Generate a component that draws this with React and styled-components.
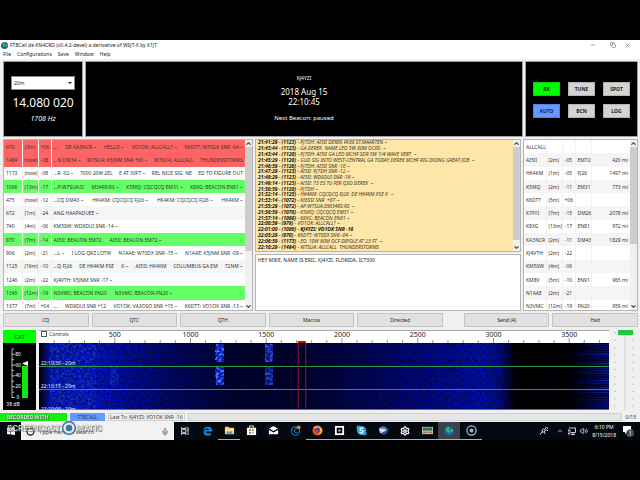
import React from 'react';
import styled, { createGlobalStyle } from 'styled-components';
import { ChevronUp, ChevronDown, Mic, Volume2, Settings, X, Minus, Copy } from 'lucide-react';

const GlobalStyle = createGlobalStyle`
  * {
    box-sizing: border-box;
  }

  body {
    margin: 0;
    background: #000000;
    font-family: 'Noto Sans', 'Open Sans', sans-serif;
    font-size: 5px;
    color: #333333;
  }

  button, input, select, textarea {
    font-family: inherit;
    font-size: inherit;
    margin: 0;
  }
`;

const Screen = styled.div`
  padding: 40px 0;
  overflow: hidden;
`;

const AppWindow = styled.main`
  background: #f0f0f0;
`;

const TitleBar = styled.header`
  display: flex;
  align-items: center;
  height: 10px;
  padding: 0 9px 0 1px;
  gap: 2px;
  background: #ffffff;
`;

const Title = styled.h1`
  flex: 1;
  margin: 0;
  font-size: 5px;
  line-height: 10px;
  font-weight: 400;
  color: #222222;
`;

const WindowButton = styled.button`
  display: flex;
  justify-content: center;
  width: 18px;
  padding: 0;
  border: 0;
  background: none;
  color: #555555;

  &:last-child {
    width: 7px;
  }
`;

const MenuBar = styled.nav`
  display: flex;
  gap: 6px;
  height: 9px;
  padding: 0 3px;
  background: #ffffff;

  a {
    font-size: 5px;
    line-height: 9px;
    color: #222222;
    text-decoration: none;
  }
`;

const Body = styled.div`
  display: grid;
  gap: 2px;
  padding: 2px 2px 3px 3px;
`;

const TopRow = styled.div`
  display: grid;
  grid-template-columns: 80fr 438fr 113fr;
  gap: 2px;
`;

const DarkPanel = styled.section`
  display: flex;
  flex-direction: column;
  align-items: center;
  height: 76px;
  padding: ${({ $top }) => $top}px 7px 0;
  background: #000000;
  border: 1px solid #a0a0a0;
  color: #ffffff;
`;

const BandBox = styled.div`
  position: relative;
  width: 100%;
  margin-bottom: 5px;

  svg {
    position: absolute;
    right: 3px;
    top: 5px;
  }
`;

const BandSelect = styled.select`
  display: block;
  width: 100%;
  height: 14px;
  padding: 0 2px;
  appearance: none;
  border: 1px solid #8a8a8a;
  border-radius: 0;
  background: #ffffff;
  color: #222222;
`;

const Readout = styled.div`
  font-size: ${({ $size }) => $size}px;
  line-height: ${({ $line }) => $line}px;
  font-style: ${({ $italic }) => ($italic ? 'italic' : 'normal')};
  margin-bottom: ${({ $after }) => $after || 0}px;
  white-space: nowrap;
`;

const ModeGrid = styled.div`
  display: grid;
  grid-template-columns: repeat(3, 1fr);
  gap: 8px;
  width: 100%;
`;

const ModeButton = styled.button`
  height: 14px;
  padding: 0;
  border: 1px solid rgba(0, 0, 0, 0.15);
  background: ${({ $color }) => $color || '#d3d3d3'};
  color: #222222;
  font-weight: 700;
`;

const MiddleRow = styled.div`
  display: grid;
  grid-template-columns: 250fr 266fr 115fr;
  gap: 2px;
  height: 172px;
`;

const Pane = styled.div`
  display: flex;
  min-width: 0;
  min-height: 0;
  overflow: hidden;
  background: ${({ $color }) => $color || '#ffffff'};
  border: 1px solid #b4b4b4;
`;

const PaneContent = styled.div`
  flex: 1;
  min-width: 0;
  overflow: hidden;
`;

const Bar = styled.div`
  display: flex;
  flex-direction: column;
  align-items: center;
  justify-content: space-between;
  width: 7px;
  background: #f0f0f0;
  color: #444444;
`;

const Thumb = styled.div`
  flex: none;
  width: 7px;
  height: ${({ $size }) => $size}%;
  margin-bottom: auto;
  background: #cdcdcd;
`;

const ListTable = styled.table`
  width: 100%;
  height: 173px;
  table-layout: fixed;
  border-collapse: collapse;

  td {
    padding: 0 2px;
    line-height: 12px;
    white-space: nowrap;
    overflow: hidden;
    border-right: 1px solid rgba(200, 200, 200, 0.25);
  }

  td:last-child {
    border-right: 0;
  }
`;

const ListRow = styled.tr`
  background: ${({ $color }) => $color};
`;

const Cell = styled.td`
  text-align: ${({ $align }) => $align || 'left'};
`;

const Messages = styled.div`
  display: flex;
  gap: ${({ $spread }) => ($spread ? 0 : 8)}px;
  justify-content: ${({ $spread }) => ($spread ? 'space-between' : 'flex-start')};
`;

const ChatColumn = styled.div`
  display: grid;
  grid-template-rows: 113fr 57fr;
  gap: 2px;
  min-width: 0;
  min-height: 0;
`;

const LogLines = styled.ol`
  display: grid;
  grid-auto-rows: 1fr;
  height: 110px;
  margin: 0;
  padding: 0 2px;
  list-style: none;
  font-style: italic;
  color: #3a3422;

  li {
    display: flex;
    align-items: center;
    min-height: 0;
    line-height: 5px;
    white-space: pre;
  }

  b {
    color: #111111;
  }
`;

const Entry = styled.textarea`
  flex: 1;
  min-width: 0;
  padding: 2px;
  border: 0;
  resize: none;
  outline: none;
  background: transparent;
  color: #222222;
`;

const ActionRow = styled.div`
  display: grid;
  grid-template-columns: repeat(5, 86fr) 15fr repeat(2, 86fr);
  gap: 3px;
`;

const ActionButton = styled.button`
  height: 14px;
  padding: 0;
  border: 1px solid #c4c4c4;
  background: #e1e1e1;
  color: #222222;
`;

const SignalRow = styled.div`
  display: grid;
  grid-template-columns: 33px 1fr 26px;
  gap: 3px;
  padding-top: 1px;
`;

const Meter = styled.div`
  background: #000000;

  svg {
    display: block;
  }
`;

const CatLabel = styled.button`
  display: block;
  width: 100%;
  height: 13px;
  padding: 0;
  border: 0;
  background: #00ff00;
  color: #114411;
  font-size: 6px;
`;

const Spectrum = styled.div`
  position: relative;
  min-width: 0;

  svg {
    display: block;
    width: 100%;
  }
`;

const ControlsToggle = styled.label`
  position: absolute;
  left: 2px;
  top: 1px;
  display: flex;
  align-items: center;
  gap: 2px;
  line-height: 6px;

  input {
    width: 6px;
    height: 6px;
    appearance: none;
    border: 1px solid #555555;
    background: #ffffff;
  }
`;

const GainBox = styled.div`
  position: relative;
  display: flex;
  justify-content: center;

  svg {
    position: absolute;
    inset: 0;
  }
`;

const GainSlider = styled.input`
  position: relative;
  width: 16px;
  height: 80px;
  appearance: none;
  writing-mode: vertical-lr;
  direction: rtl;
  background: linear-gradient(90deg, transparent 7px, #e2e2e2 7px, #e2e2e2 9px, transparent 9px);

  &::-webkit-slider-thumb {
    appearance: none;
    width: 15px;
    height: 5px;
    background: #1fc93f;
  }
`;

const StatusBar = styled.footer`
  display: flex;
  gap: 3px;
  height: 9px;
  padding-right: 3px;
`;

const StatusItem = styled.div`
  flex: ${({ $width }) => ($width ? `0 0 ${$width}px` : '1')};
  height: 8px;
  padding: 0 1px;
  text-align: ${({ $align }) => $align || 'left'};
  background: ${({ $color }) => $color || '#e6e6e6'};
  border: ${({ $plain }) => ($plain ? '0' : '1px solid #d0d0d0')};
  line-height: ${({ $plain }) => ($plain ? 8 : 6)}px;
  white-space: nowrap;
`;

const TaskBar = styled.footer`
  display: flex;
  height: 18px;
  background: #04080f;
  color: #ffffff;
`;

const TaskButton = styled.button`
  display: flex;
  align-items: center;
  justify-content: center;
  width: ${({ $width }) => $width || 22}px;
  padding: 0;
  border: 0;
  border-bottom: 1px solid ${({ $open }) => ($open ? '#8ab8e8' : 'transparent')};
  background: ${({ $active }) => ($active ? '#3a4148' : 'none')};
  background-clip: padding-box;
  color: #ffffff;
`;

const SearchBox = styled.label`
  display: flex;
  align-items: center;
  width: 153px;
  padding: 1px 5px 0;
  gap: 4px;
  background: #f2f2f2;
  color: #555555;

  input {
    flex: 1;
    min-width: 0;
    padding: 0;
    border: 0;
    outline: none;
    background: none;
    font-size: 6px;
  }

  input::placeholder {
    color: #444444;
  }
`;

const Tray = styled.div`
  display: flex;
  align-items: center;
  gap: 4px;
  margin-left: auto;
  padding-right: 6px;
`;

const Clock = styled.time`
  display: grid;
  text-align: center;
  line-height: 8px;
`;

const Stage = styled.div`
  position: relative;
`;

const Watermark = styled.div`
  position: absolute;
  left: 7px;
  top: 0;
  color: #ffffff;
  font-weight: 700;
  line-height: 8px;
  text-shadow: 0 0 1px #000000, 1px 1px 1px #666666;
  opacity: 0.9;
  pointer-events: none;
`;

const WatermarkName = styled.div`
  display: flex;
  align-items: center;
  height: 14px;
  font-family: 'Inter', 'Liberation Sans', sans-serif;
  font-size: 8px;
  font-weight: 500;
`;

const red = '#ff6464';
const green = '#64ff64';

const activity = [
  { freq: 976, age: '(3m)', snr: '+06', color: red, spread: true, text: ['...', 'DE KA3NCR ~', 'HELLO ~', 'VO1OK: ALLCALL? ~', 'K6DTT: WT0DX SNR -04 ~'] },
  { freq: 1484, age: '(now)', snr: '-08', color: red, spread: true, text: ['...N DM34 ~', 'W7SUA: K5JNM SNR +00 ~', 'W7SUA: ALLCALL', 'THUNDERSTORMS'] },
  { freq: 1173, age: '(now)', snr: '-08', spread: true, text: ['...R -02 ~', '7000 20W 2EL', 'E AT 30FT ~', 'REL NICE SIG. NE', 'ED TO FIGURE OUT'] },
  { freq: 1066, age: '(13m)', snr: '-17', color: green, spread: true, text: ['...P:W7SUA:D', 'M34RS:RS ~', 'K5MQ: CQCQCQ EM31 ~', 'K8XG: BEACON EN81 ~'] },
  { freq: 475, age: '(now)', snr: '-12', spread: true, text: ['...CQ DM43 ~', 'HK4KM: CQCQCQ FJ26 ~', 'HK4KM: CQCQCQ FJ26 ~', 'HK4KM ~'] },
  { freq: 672, age: '(1m)', snr: '-24', text: ['ANG HAAPADUEE ~'] },
  { freq: 740, age: '(4m)', snr: '-06', text: ['KM5SW: WD9DUI SNR -14 ~'] },
  { freq: 870, age: '(7m)', snr: '-14', color: green, text: ['AI5II: BEACON EM72', 'AI5II: BEACON EM72 ~'] },
  { freq: 906, age: '(2m)', snr: '-21', spread: true, text: ['...L ~', 'I LOG QRZ LOTW', 'N1AAE: WT0DX SNR -15 ~', 'N1AAE: K5JNM SNR -09 ~'] },
  { freq: 1125, age: '(16m)', snr: '-10', spread: true, text: ['...Q FJ26', 'DE HK4KM PSE', 'K ~', 'AI5II: HK4KM', 'COLUMBUS GA EM', '72NM ~'] },
  { freq: 1246, age: '(2m)', snr: '-22', text: ['KJ4VTH: K5JNM SNR -17 ~'] },
  { freq: 1345, age: '(12m)', snr: '-19', color: green, text: ['N3VMC: BEACON FN20', 'N3VMC: BEACON FN20 ~'] },
  { freq: 1377, age: '(7m)', snr: '+04', spread: true, text: ['...', 'WD9DUI SNR +12', 'VO1OK: VA3OSO SNR +15 ~', 'K6DTT: VO1OK SNR -13 ~'] }
];

const log = [
  ['21:41:29', 1123, 'PJ7DH: AI5II DEREK FK88 ST.MAARTEN ~'],
  ['21:43:44', 1123, 'GA DEREK. NAME LEO 5W 80M OCFD  ~'],
  ['21:43:44', 1120, 'PJ7DH: AI5II GA LEO MCHF SDR 5W 1/4 WAVE VERT  ~'],
  ['21:45:29', 1120, 'GUD SIG INTO WEST-CENTRAL GA TODAY DEREK MCHF RIG DOING GREAT JOB  ~'],
  ['21:46:59', 1120, 'PJ7DH: AI5II SNR -10 ~'],
  ['21:47:29', 1123, 'AI5II: PJ7DH SNR -12 ~'],
  ['21:48:29', 1123, 'AI5II: WD9DUI SNR -16 ~'],
  ['21:49:14', 1123, 'AI5II: 73 ES TU FER QSO DEREK  ~'],
  ['21:50:59', 1120, 'PJ7DH ~'],
  ['21:52:14', 1125, 'HK4KM: CQCQCQ FJ26  DE HK4KM PSE K  ~'],
  ['21:53:14', 1072, 'KI6SSI SNR  +07 ~'],
  ['21:55:29', 1072, 'AP:W7SUA:DM34RS:RS  ~'],
  ['21:56:59', 1070, 'K5MQ: CQCQCQ EM31 ~'],
  ['21:57:14', 1066, 'K8XG: BEACON EN81 ~'],
  ['22:00:59', 978, 'VO1OK: ALLCALL? ~'],
  ['22:01:00', 1080, 'KJ4YZI: VO1OK SNR -16', true],
  ['22:05:29', 970, 'K6DTT: WT0DX SNR -04 ~'],
  ['22:06:59', 1173, 'EO. 10W 80M OCF DIPOLE AT 23 FT  ~'],
  ['22:10:29', 1494, 'W7SUA: ALLCALL  THUNDERSTORMS']
];

const stations = [
  ['ALLCALL', '', '', '', ''],
  ['AI5II', '(2m)', '-05', 'EM72', '420 mi'],
  ['HK4KM', '(1m)', '-05', 'FJ26', '1497 mi'],
  ['K5MQ', '(2m)', '-11', 'EM31', '773 mi'],
  ['K6DTT', '(5m)', '+06', '', ''],
  ['K7FYI', '(7m)', '-15', 'DM26', '2078 mi'],
  ['K8XG', '(13m)', '-17', 'EN81', '972 mi'],
  ['KA3NCR', '(2m)', '-11', 'DM43', '1829 mi'],
  ['KJ4VTH', '(2m)', '-22', '', ''],
  ['KM5SW', '(4m)', '-06', '', ''],
  ['KM8V', '(5m)', '-10', 'EN91', '965 mi'],
  ['N1AAE', '(2m)', '-21', '', ''],
  ['N3VMC', '(12m)', '-19', 'FN20', '959 mi']
];

// the ruler and waterfall cover 0 to 3763 Hz
const hz = (value) => `${(value / 3763) * 100}%`;

function ScrollBar({ size }) {
  return (
    <Bar>
      <ChevronUp size={7} strokeWidth={4} />
      <Thumb $size={size} />
      <ChevronDown size={7} strokeWidth={4} />
    </Bar>
  );
}

function Globe({ size }) {
  return (
    <svg width={size} height={size} viewBox="0 0 12 12">
      <circle cx="6" cy="6" r="6" fill="#1761a0" />
      <path d="M3 2Q6 0 7 2L6 4L8 6L6 9L4 7L2 6Z" fill="#34b56a" />
      <path d="M8 3L11 5L9 8Z" fill="#4fc981" />
    </svg>
  );
}

function LevelMeter() {
  return (
    <Meter>
      <CatLabel>CAT</CatLabel>
      <svg width="33" height="67" viewBox="0 0 33 67">
        <path d="M9 6V55" stroke="#ffffff" strokeWidth="0.7" />
        {Array.from({ length: 10 }, (_, i) => (
          <path key={i} d={`M9 ${54.5 - i * 5.4}h${i % 2 ? 2 : 3}`} stroke="#ffffff" strokeWidth="0.7" />
        ))}
        {[0, 20, 40, 60, 80].map((level) => (
          <text key={level} x="15" y={56 - level * 0.54} textAnchor="middle" fontSize="5" fill="#ffffff">{level}</text>
        ))}
        <rect x="19" y="23" width="6" height="32" fill="#12e612" />
        <path d="M19 20.500L25 18V23Z" fill="#ffffff" />
        <text x="10" y="63" textAnchor="middle" fontSize="5" fill="#ffffff">38 dB</text>
      </svg>
    </Meter>
  );
}

function Ruler() {
  return (
    <svg height="13">
      <rect width="100%" height="13" fill="#ffffff" />
      <path d="M0 0.500H2000" stroke="#aaaaaa" />
      {Array.from({ length: 37 }, (_, i) => (
        <line key={i} x1={hz((i + 1) * 100)} x2={hz((i + 1) * 100)} y1={(i + 1) % 5 ? 10 : 8} y2="13" stroke="#666666" strokeWidth="0.7" />
      ))}
      {[500, 1000, 1500, 2000, 2500, 3000, 3500].map((mark) => (
        <text key={mark} x={hz(mark)} y="7" textAnchor="middle" fontSize="7" fill="#222222">{mark}</text>
      ))}
      <rect x={hz(1708)} y="11" width="8" height="2" fill="#d40000" />
    </svg>
  );
}

function Waterfall() {
  const bursts = [[1168, 1, 1], [1168, 24, 1], [1492, 1, 0.8], [1492, 24, 0.7], [470, 24, 0.3]];

  return (
    <svg height="67">
      <defs>
        <linearGradient id="band">
          <stop offset="0" stopColor="#000010" />
          <stop offset="0.008" stopColor="#000848" />
          <stop offset="0.02" stopColor="#0018c4" />
          <stop offset="0.1" stopColor="#0014d0" />
          <stop offset="0.16" stopColor="#000ca0" />
          <stop offset="0.24" stopColor="#000668" />
          <stop offset="0.34" stopColor="#000334" />
          <stop offset="0.45" stopColor="#000330" />
          <stop offset="0.56" stopColor="#000558" />
          <stop offset="0.68" stopColor="#00088c" />
          <stop offset="0.78" stopColor="#000fb4" />
          <stop offset="0.81" stopColor="#000a88" />
          <stop offset="0.835" stopColor="#000000" />
          <stop offset="0.93" stopColor="#000004" />
          <stop offset="1" stopColor="#00064c" />
        </linearGradient>
        <linearGradient id="streak">
          <stop offset="0" stopColor="#0020d8" stopOpacity="0" />
          <stop offset="1" stopColor="#1530ee" />
        </linearGradient>
        <filter id="noise" x="0" y="0" width="100%" height="100%" colorInterpolationFilters="sRGB">
          <feTurbulence type="fractalNoise" baseFrequency="0.7 0.4" numOctaves="2" seed="8" />
          <feColorMatrix values="0 0 0 0 0  0 0 0 0 0  0 0 0 0 0.04  1.6 0 0 0 -0.6" />
        </filter>
        <filter id="sparkle" x="0" y="0" width="100%" height="100%" colorInterpolationFilters="sRGB">
          <feTurbulence type="fractalNoise" baseFrequency="0.35 0.4" numOctaves="2" seed="3" result="grain" />
          <feColorMatrix in="grain" values="0 0 0 0 0.3  0 0 0 0 0.45  0 0 0 0 1  4 0 0 0 -1.8" />
        </filter>
      </defs>
      <rect width="100%" height="67" fill="url(#band)" />
      <rect width="100%" height="67" filter="url(#noise)" />
      <rect x="2%" width="8%" height="67" filter="url(#sparkle)" opacity="0.3" />
      {Array.from({ length: 28 }, (_, i) => (
        <rect key={i} x={`${93 + (i * 7) % 4}%`} y={1 + i * 2.4} width="7%" height="1" fill="url(#streak)" opacity={0.35 + ((i * 5) % 7) / 10} />
      ))}
      {bursts.map(([freq, y, strength]) => (
        <g key={`${freq}-${y}`} opacity={strength}>
          <rect x={hz(freq)} y={y} width="8" height="18" fill="#0a28d8" opacity="0.7" />
          <rect x={hz(freq)} y={y} width="8" height="18" filter="url(#sparkle)" />
        </g>
      ))}
      {[24, 47, 67].map((y) => (
        <rect key={y} y={y - 1} width="100%" height="1" fill="#2a9a48" />
      ))}
      {['22:10:30', '22:10:15', '22:10:00'].map((time, i) => (
        <text key={time} x="2" y={22 + i * 23} fontSize="5" fill="#e8eeff">{time} - 20m</text>
      ))}
      <rect x={hz(1708)} width="1" height="67" fill="#9c1830" />
      <rect x={hz(1758)} width="1" height="67" fill="#9c1830" />
    </svg>
  );
}

function GainControl() {
  return (
    <GainBox>
      <svg width="26" height="80">
        {Array.from({ length: 11 }, (_, i) => (
          <path key={i} d={`M2 ${3 + i * 7.3}h2M20 ${3 + i * 7.3}h2`} stroke="#b5b5b5" strokeWidth="0.7" />
        ))}
      </svg>
      <GainSlider type="range" aria-label="Gain" min="0" max="100" defaultValue="100" />
    </GainBox>
  );
}

const taskIcons = [
  { name: 'Edge', art: <path d="M1 6C1 1 11 0 11 6V7H4Q4 10 10 9V11C4 13 1 10 2 7Q3 4 6 3Q1 4 1 6ZM4 5.500H8Q7 3 5 4Z" fill="#1689e0" /> },
  { name: 'Files', open: true, art: <><path d="M1 2H5L6 3H11V10H1Z" fill="#f3cf70" /><path d="M1 5H11V7H1Z" fill="#fbe6a6" /><path d="M3 7H9V10H3Z" fill="#4aa3dd" /></> },
  { name: 'Store', art: <><path d="M4 3V1H8V3" fill="none" stroke="#ffffff" /><path d="M1 3H11V11H1Z" fill="#ffffff" /><path d="M3.500 4.500h2v2h-2Z" fill="#e8513b" /><path d="M6.500 4.500h2v2h-2Z" fill="#70a83b" /><path d="M3.500 7.500h2v2h-2Z" fill="#3488d8" /><path d="M6.500 7.500h2v2h-2Z" fill="#e8b33b" /></> },
  { name: 'Mail', art: <><path d="M1 4L6 1L11 4V10H1Z" fill="#ffffff" /><path d="M1 4.500L6 7.500L11 4.500" fill="none" stroke="#04080f" strokeWidth="1.4" /></> },
  { name: 'CCleaner', art: <><circle cx="6" cy="6.500" r="4.500" fill="none" stroke="#1c73a8" strokeWidth="1.400" /><path d="M8 4Q4 4 4.500 7Q6 9 8 8" fill="none" stroke="#3e9cca" /><circle cx="9.500" cy="2.500" r="2" fill="#d8854a" /></> },
  { name: 'Firefox', open: true, art: <><circle cx="6" cy="6" r="5.500" fill="#e8561e" /><path d="M1 3Q6 -1 11 4Q11 10 7 11Q10 7 7 5Z" fill="#ffb52e" /><circle cx="6" cy="5.500" r="2.800" fill="#3c4aa8" /><path d="M2 4Q5 5 7 7Q4 10 2 8Z" fill="#d83a2a" /></> },
  { name: 'Square', open: true, art: <><path d="M1 1H11V11H1Z" fill="#ffffff" /><path d="M3 3H9V9H3Z" fill="#000000" /><path d="M5 5H7V7H5Z" fill="#ffffff" /></> },
  { name: 'Skype', open: true, art: <><circle cx="6" cy="6" r="5" fill="#1cabe8" /><circle cx="3" cy="3" r="2.500" fill="#1cabe8" /><circle cx="9" cy="9" r="2.500" fill="#1cabe8" /><path d="M8 4Q6 2.500 4.500 4Q4 5.500 6 6Q8.500 6.500 7.500 8Q6 9.500 4 8" fill="none" stroke="#ffffff" strokeWidth="1.300" /></> },
  { name: 'Thunderbird', open: true, art: <><path d="M1 3Q6 -1 11 4Q12 9 7 11Q2 10 1 7Z" fill="#274f94" /><path d="M1 4L7 3L9 6L3 9Z" fill="#d7dde8" /><path d="M4 2Q9 1 10 6Q8 4 4 4Z" fill="#5784bd" /></> },
  { name: 'Settings', open: true },
  { name: 'Radio', open: true, art: <><path d="M0 2H12V10H0Z" fill="#b6bda5" /><path d="M1 3H11V6H1Z" fill="#25593d" /><path d="M1 8H4M5 8H7M8 8H11" stroke="#a04a3a" /><path d="M2 5L4 4L6 5L8 4L10 5" fill="none" stroke="#85bd78" strokeWidth="0.6" /></> },
  { name: 'FT8Call', open: true, active: true, globe: true },
  { name: 'Recorder', open: true, art: <><circle cx="6" cy="6" r="5" fill="none" stroke="#a9c6dd" strokeWidth="1.300" /><circle cx="6" cy="6" r="2.200" fill="#7fb2dc" /></> }
];

function TaskIcon({ icon }) {
  if (icon.globe) return <Globe size={10} />;
  if (!icon.art) return <Settings size={10} strokeWidth={3} />;
  return <svg width="11" height="11" viewBox="0 0 12 12">{icon.art}</svg>;
}

export default function App() {
  return (
    <Screen>
      <GlobalStyle />
      <AppWindow>
        <TitleBar>
          <Globe size={7} />
          <Title>FT8Call de KN4CRD (v0.4.2-devel) a derivative of WSJT-X by K1JT</Title>
          <WindowButton aria-label="Minimize"><Minus size={6} /></WindowButton>
          <WindowButton aria-label="Restore"><Copy size={6} /></WindowButton>
          <WindowButton aria-label="Close"><X size={7} /></WindowButton>
        </TitleBar>
        <MenuBar>
          {['File', 'Configurations', 'Save', 'Window', 'Help'].map((item) => (
            <a key={item} href="#menu">{item}</a>
          ))}
        </MenuBar>

        <Body>
          <TopRow>
            <DarkPanel $top={14}>
              <BandBox>
                <BandSelect aria-label="Band" defaultValue="20m">
                  <option>20m</option>
                </BandSelect>
                <svg width="4" height="4" viewBox="0 0 4 4"><path d="M0 1H4L2 3Z" fill="#222222" /></svg>
              </BandBox>
              <Readout $size={12} $line={16} $after={3}>14.080 020</Readout>
              <Readout $size={7} $line={9} $italic>1708 Hz</Readout>
            </DarkPanel>
            <DarkPanel $top={12}>
              <Readout $size={5} $line={8} $after={5}>KJ4YZI</Readout>
              <Readout $size={8} $line={10}>2018 Aug 15</Readout>
              <Readout $size={8} $line={10} $after={7}>22:10:45</Readout>
              <Readout $size={6} $line={8}>Next Beacon: paused</Readout>
            </DarkPanel>
            <DarkPanel $top={20}>
              <ModeGrid>
                <ModeButton $color="#00ff00">RX</ModeButton>
                <ModeButton>TUNE</ModeButton>
                <ModeButton>SPOT</ModeButton>
                <ModeButton $color="#6699ff">AUTO</ModeButton>
                <ModeButton>BCN</ModeButton>
                <ModeButton>LOG</ModeButton>
              </ModeGrid>
            </DarkPanel>
          </TopRow>

          <MiddleRow>
            <Pane>
              <PaneContent>
                <ListTable>
                  <colgroup>
                    <col width="18" />
                    <col width="16" />
                    <col width="13" />
                    <col />
                  </colgroup>
                  <tbody>
                    {activity.map((row, index) => (
                      <ListRow key={row.freq} $color={row.color || (index % 2 ? '#f5f5f5' : '#ffffff')}>
                        <Cell>{row.freq}</Cell>
                        <Cell $align="center">{row.age}</Cell>
                        <Cell $align="center">{row.snr}</Cell>
                        <Cell>
                          <Messages $spread={row.spread}>
                            {row.text.map((part, i) => <span key={i}>{part}</span>)}
                          </Messages>
                        </Cell>
                      </ListRow>
                    ))}
                  </tbody>
                </ListTable>
              </PaneContent>
              <ScrollBar size={61} />
            </Pane>

            <ChatColumn>
              <Pane $color="#fee6a8">
                <PaneContent>
                  <LogLines>
                    {log.map(([time, freq, text, own], index) => (
                      <li key={index}>
                        <b>{time} - ({freq})</b>
                        {own ? <b> - {text}</b> : <span> - {text}</span>}
                      </li>
                    ))}
                  </LogLines>
                </PaneContent>
                <ScrollBar size={84} />
              </Pane>
              <Pane>
                <Entry aria-label="Outgoing message" defaultValue="HEY MIKE, NAME IS ERIC, KJ4YZI, FLORIDA, IC7300" />
              </Pane>
            </ChatColumn>

            <Pane>
              <PaneContent>
                <ListTable>
                  <colgroup>
                    <col width="22" />
                    <col width="16" />
                    <col width="13" />
                    <col width="16" />
                    <col />
                  </colgroup>
                  <tbody>
                    {stations.map(([call, age, snr, grid, distance], index) => (
                      <ListRow key={call} $color={index % 2 ? '#f5f5f5' : '#ffffff'}>
                        <Cell>{call}</Cell>
                        <Cell>{age}</Cell>
                        <Cell $align="center">{snr}</Cell>
                        <Cell>{grid}</Cell>
                        <Cell $align="right">{distance}</Cell>
                      </ListRow>
                    ))}
                  </tbody>
                </ListTable>
              </PaneContent>
              <ScrollBar size={57} />
            </Pane>
          </MiddleRow>

          <ActionRow>
            <ActionButton>CQ</ActionButton>
            <ActionButton>QTC</ActionButton>
            <ActionButton>QTH</ActionButton>
            <ActionButton>Macros</ActionButton>
            <ActionButton>Directed</ActionButton>
            <span />
            <ActionButton>Send (4)</ActionButton>
            <ActionButton>Halt</ActionButton>
          </ActionRow>

          <SignalRow>
            <LevelMeter />
            <Spectrum>
              <Ruler />
              <Waterfall />
              <ControlsToggle>
                <input type="checkbox" />
                Controls
              </ControlsToggle>
            </Spectrum>
            <GainControl />
          </SignalRow>
        </Body>

        <Stage>
          <StatusBar>
            <StatusItem $width={67} $color="#12f012" $plain />
            <StatusItem $width={35} $color="#6699ff" $align="center" $plain>FT8CALL</StatusItem>
            <StatusItem $width={74} $color="#f0f0f0">Last Tx: KJ4YZI: VO1OK SNR -16</StatusItem>
            <StatusItem />
            <StatusItem $width={12} $color="#f0f0f0" $plain>0/15</StatusItem>
          </StatusBar>
          <TaskBar>
            <TaskButton $width={21} aria-label="Start">
              <svg width="8" height="8" viewBox="0 0 8 8"><path d="M0 1L3.500 .5V3.700H0ZM4 .4L8 0V3.700H4ZM0 4.200H3.500V7.500L0 7ZM4 4.200H8V8L4 7.500Z" fill="#ffffff" /></svg>
            </TaskButton>
            <SearchBox>
              <svg width="9" height="9" viewBox="0 0 9 9"><circle cx="4.500" cy="4.500" r="3.500" fill="none" stroke="#222222" strokeWidth="1.300" /></svg>
              <input type="search" placeholder="Type here to search" />
              <Mic size={8} />
            </SearchBox>
            <TaskButton aria-label="Task view">
              <svg width="8" height="8" viewBox="0 0 8 8"><path d="M.5 0V1.500H5V0M.5 8V6.500H5V8M.5 2.700H5V5.300H.5ZM7 0V8M6.300 3H7.700" fill="none" stroke="#ffffff" strokeWidth="0.8" /></svg>
            </TaskButton>
            {taskIcons.map((icon) => (
              <TaskButton key={icon.name} aria-label={icon.name} $open={icon.open} $active={icon.active}>
                <TaskIcon icon={icon} />
              </TaskButton>
            ))}
            <Tray>
              <svg width="8" height="8" viewBox="0 0 8 8"><path d="M0 8Q1 4 4 5Q5 5 5 7M3 5A1.500 1.500 0 1 1 4 5M5 3Q7 2 8 4M6 2A1 1 0 1 1 7 2" fill="none" stroke="#ffffff" strokeWidth="0.8" /></svg>
              <span />
              <ChevronUp size={8} />
              <svg width="8" height="8" viewBox="0 0 8 8"><path d="M1 1H7.500V5.500H3M5 5.500V7.500M3 7.500H7M0 3H2V7H0Z" fill="none" stroke="#ffffff" strokeWidth="0.8" /></svg>
              <Volume2 size={8} />
              <Clock>
                <span>6:10 PM</span>
                <span>8/15/2018</span>
              </Clock>
              <svg width="14" height="12" viewBox="0 0 14 12"><path d="M3 1H11V7H7L5 9V7H3Z" fill="#ffffff" /><circle cx="10" cy="8" r="3.500" fill="#333a40" stroke="#a0a0a0" strokeWidth="0.6" /><text x="10" y="10" textAnchor="middle" fontSize="5" fill="#ffffff">3</text></svg>
            </Tray>
          </TaskBar>
          <Watermark>
            <div>RECORDED WITH</div>
            <WatermarkName>
              SCREENCAST
              <svg width="16" height="16" viewBox="0 0 15 15">
                <circle cx="7.500" cy="7.500" r="6" fill="#dfe8ee" stroke="#3a6a94" strokeWidth="1.500" />
                <circle cx="7.500" cy="7.500" r="3" fill="#2c689c" />
              </svg>
              MATIC
            </WatermarkName>
          </Watermark>
        </Stage>
      </AppWindow>
    </Screen>
  );
}
